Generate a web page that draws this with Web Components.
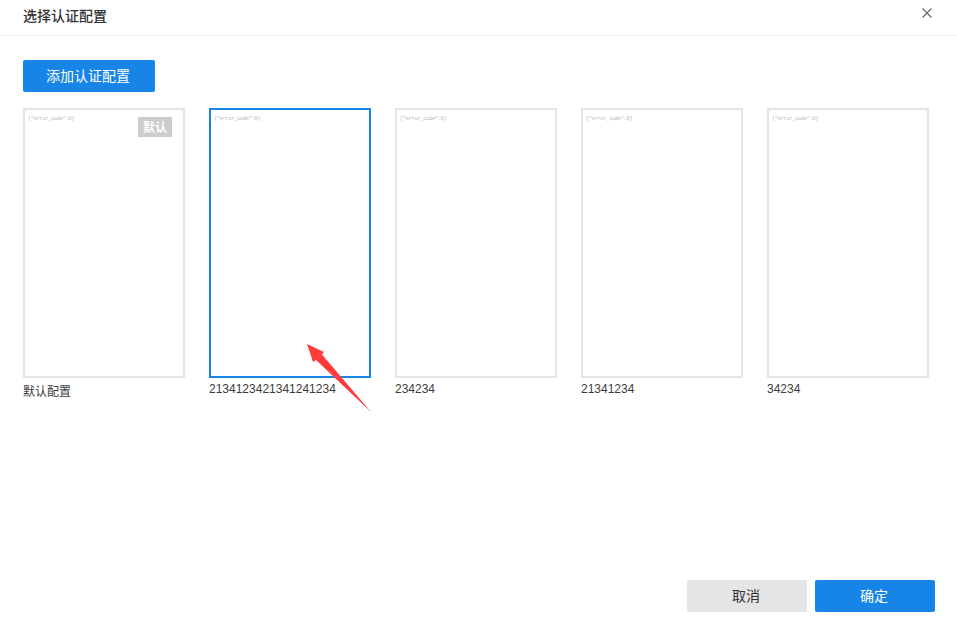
<!DOCTYPE html>
<html>
<head>
    <meta charset="utf-8">
    <title>选择认证配置</title>
    <style>
        html, body {
            margin: 0;
            height: 100%;
            background: #fff;
            font-family: "Liberation Sans", "Noto Sans CJK SC", sans-serif;
            color: #333;
        }
    </style>
</head>
<body>
    <auth-dialog heading="选择认证配置">
        <ui-button primary style="--w:132px">添加认证配置</ui-button>
        <div slot="cards" style="display:contents">
            <config-card label="默认配置" badge="默认"></config-card>
            <config-card label="2134123421341241234" selected></config-card>
            <config-card label="234234"></config-card>
            <config-card label="21341234"></config-card>
            <config-card label="34234"></config-card>
        </div>
        <ui-button slot="footer" style="--w:120px">取消</ui-button>
        <ui-button slot="footer" primary style="--w:120px">确定</ui-button>
    </auth-dialog>
    <note-arrow></note-arrow>

    <template id="auth-dialog">
        <style>
            :host {
                display: flex;
                flex-direction: column;
                height: 629px;
                box-sizing: border-box;
            }
            header {
                display: flex;
                justify-content: space-between;
                height: 35px;
                padding: 0 24px 0 23px;
                border-bottom: 1px solid #eee;
            }
            h1 {
                margin: 0;
                padding-top: 6px;
                font-size: 14px;
                line-height: 20px;
                font-weight: 500;
                color: #333;
            }
            svg { margin-top: 7px; }
            .top { padding: 24px 23px 16px; }
            .cards {
                display: flex;
                gap: 24px;
                padding: 0 23px;
                flex: 1;
            }
            footer {
                display: flex;
                justify-content: flex-end;
                gap: 8px;
                padding: 0 22px 17px 0;
            }
        </style>
        <header>
            <h1></h1>
            <svg width="12" height="12" viewBox="0 0 12 12" fill="none" stroke="#666" stroke-width="1.2">
                <path d="M1.5 1.5l9 9M10.5 1.5l-9 9"/>
            </svg>
        </header>
        <div class="top"><slot></slot></div>
        <div class="cards"><slot name="cards"></slot></div>
        <footer><slot name="footer"></slot></footer>
    </template>

    <template id="ui-button">
        <style>
            :host {
                display: inline-flex;
                align-items: center;
                justify-content: center;
                box-sizing: border-box;
                width: var(--w, 120px);
                height: 32px;
                padding: 0 2px 2px 0;
                border-radius: 2px;
                background: #e5e5e5;
                color: #333;
                font-size: 14px;
                cursor: pointer;
                vertical-align: top;
            }
            :host([primary]) {
                background: #1785e8;
                color: #fff;
            }
        </style>
        <slot></slot>
    </template>

    <template id="config-card">
        <style>
            :host {
                display: block;
                width: 162px;
                font-size: 12px;
                color: #333;
            }
            .box {
                position: relative;
                box-sizing: border-box;
                height: 270px;
                border: 2px solid #e5e5e5;
                padding: 6px 3px;
                background: #fff;
            }
            :host([selected]) .box { border-color: #1785e8; }
            code {
                display: block;
                font-family: "Liberation Mono", monospace;
                font-size: 5px;
                line-height: 7px;
                letter-spacing: -0.1px;
                color: #b5b5b5;
            }
            .badge {
                position: absolute;
                top: 7px;
                right: 11px;
                width: 34px;
                height: 20px;
                line-height: 22px;
                text-align: center;
                background: #ccc;
                color: #fff;
                font-weight: 700;
                font-size: 12px;
            }
            .badge:empty { display: none; }
            .label {
                margin-top: 3px;
                line-height: 16px;
                color: #3c3c3c;
            }
            :host([badge]) .label { margin-top: 6px; }
        </style>
        <div class="box">
            <code>{"error_code":0}</code>
            <div class="badge"></div>
        </div>
        <div class="label"></div>
    </template>

    <template id="note-arrow">
        <style>
            :host {
                position: absolute;
                left: 300px;
                top: 340px;
                width: 80px;
                height: 80px;
                pointer-events: none;
            }
            svg { display: block; }
        </style>
        <svg width="80" height="80" viewBox="300 340 80 80">
            <path fill="#ff3b3b" d="M307 344L324 352L322 354.5L371 412L316 360L313 362Z"/>
        </svg>
    </template>

    <script>
        function stamp(host, id) {
            const root = host.attachShadow({ mode: 'open' });
            root.appendChild(document.getElementById(id).content.cloneNode(true));
            return root;
        }

        class AuthDialog extends HTMLElement {
            constructor() {
                super();
                stamp(this, 'auth-dialog');
            }

            connectedCallback() {
                this.shadowRoot.querySelector('h1').textContent = this.getAttribute('heading');
            }
        }

        class UiButton extends HTMLElement {
            constructor() {
                super();
                stamp(this, 'ui-button');
            }
        }

        class ConfigCard extends HTMLElement {
            constructor() {
                super();
                stamp(this, 'config-card');
            }

            connectedCallback() {
                this.shadowRoot.querySelector('.label').textContent = this.getAttribute('label');
                this.shadowRoot.querySelector('.badge').textContent = this.getAttribute('badge') || '';
            }
        }

        class NoteArrow extends HTMLElement {
            constructor() {
                super();
                stamp(this, 'note-arrow');
            }
        }

        customElements.define('auth-dialog', AuthDialog);
        customElements.define('ui-button', UiButton);
        customElements.define('config-card', ConfigCard);
        customElements.define('note-arrow', NoteArrow);
    </script>
</body>
</html>
